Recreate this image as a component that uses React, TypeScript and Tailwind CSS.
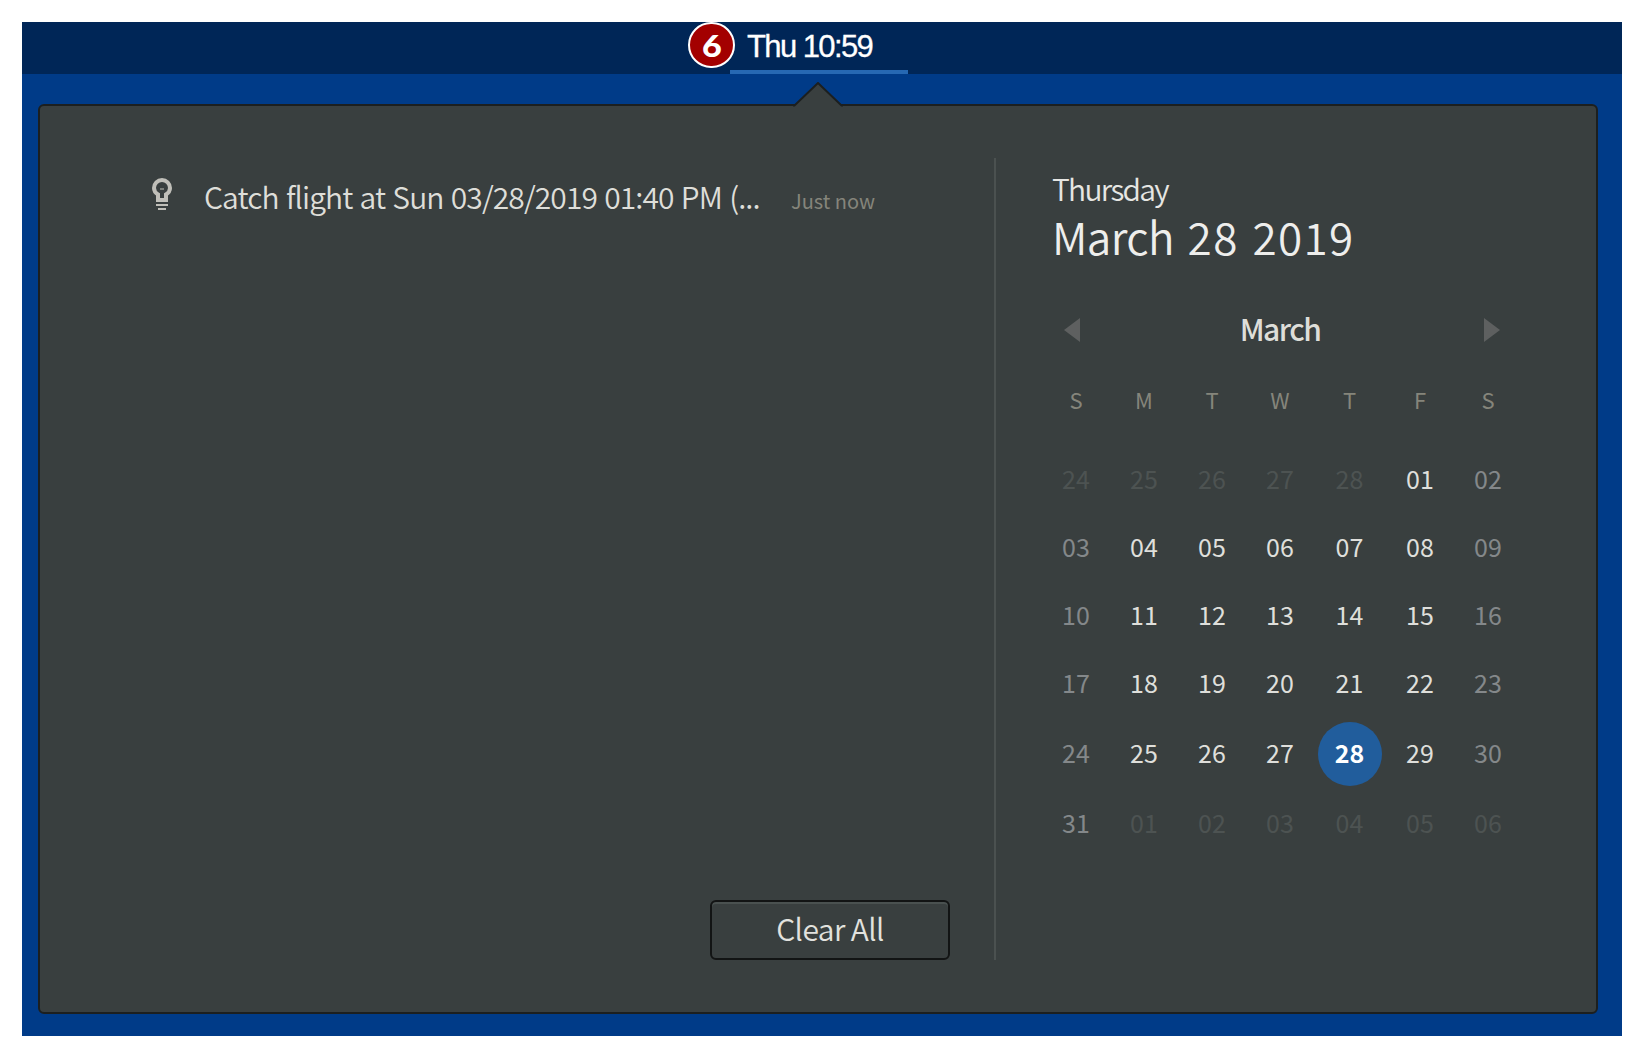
const WEEKDAYS = ["S", "M", "T", "W", "T", "F", "S"];
const WEEKS = [
  ["24", "25", "26", "27", "28", "01", "02"],
  ["03", "04", "05", "06", "07", "08", "09"],
  ["10", "11", "12", "13", "14", "15", "16"],
  ["17", "18", "19", "20", "21", "22", "23"],
  ["24", "25", "26", "27", "28", "29", "30"],
  ["31", "01", "02", "03", "04", "05", "06"],
];

function dayClass(week: number, day: number) {
  if (week === 4 && day === 4)
    return "flex size-16 items-center justify-center rounded-full bg-[#215d9c] pb-[3px] font-bold text-white";
  if ((week === 0 && day < 5) || (week === 5 && day > 0)) return "pb-[3px] text-[#4d5352]";
  if (day === 0 || day === 6) return "pb-[3px] text-[#84888a]";
  return "pb-[3px] text-[#dfdfdb]";
}

function Bulb() {
  return (
    <svg width="20" height="32" viewBox="0 0 20 32" fill="none" className="mt-[2px] shrink-0">
      <path d="M6 20V16.500C3.500 15 2 12.500 2 10a8 8 0 0 1 16 0c0 2.500-1.500 5-4 6.500V20" stroke="#c0bfb9" strokeWidth="4" />
      <path d="M4 20h12v4H4zM4 26h12v2H4zM6 30h8v2H6z" fill="#c0bfb9" />
      <path d="M8 10h4v2H8z" fill="#7d807c" />
    </svg>
  );
}

export default function App() {
  return (
    <div className="h-[1062px] w-[1646px] bg-white p-[22px] font-['Noto_Sans_CJK_SC',sans-serif]">
      <div className="flex h-[1014px] w-[1600px] flex-col bg-[#003b88]">
        <header className="flex h-[52px] shrink-0 bg-[#002657] pl-[666px]">
          <div className="relative z-10 -mr-[5px] flex h-[46px] w-[47px] items-center justify-center rounded-full border-2 border-white bg-[#a30000] font-['Lato',sans-serif] text-[31px] font-black text-white">
            <span className="scale-x-110">6</span>
          </div>
          <div className="flex h-[52px] w-[178px] border-b-4 border-[#2668b3] pl-[17px] font-['Liberation_Sans',sans-serif] text-[31px] leading-[49px] tracking-[-1.6px] text-white [-webkit-text-stroke:0.3px_white]">
            Thu 10:59
          </div>
        </header>
        <main className="relative mt-[30px] ml-4 flex h-[910px] w-[1560px] rounded-md border-2 border-[#1c1f1f] bg-[#393f3f]">
          <svg className="absolute -top-[24px] left-[753px]" width="50" height="26" viewBox="0 0 50 26">
            <path d="M1 26V24L25 1L49 24V26Z" fill="#393f3f" />
            <path d="M0 23.500H1.500L25 1L48.500 23.500H50" fill="none" stroke="#1c1f1f" strokeWidth="2" />
          </svg>
          <section className="flex w-[954px] flex-col">
            <div className="mt-[70px] flex h-9 pl-[112px]">
              <Bulb />
              <span className="ml-[32px] w-[587px] text-[30px] leading-[40px] font-[350] tracking-[-0.9px] [word-spacing:1.4px] whitespace-nowrap text-[#deded9]">
                Catch flight at Sun 03/28/2019 01:40 PM (...
              </span>
              <span className="text-[20px] leading-[49px] text-[#85857b]">Just now</span>
            </div>
            <button className="mt-auto mb-[52px] ml-[670px] h-[60px] w-[240px] rounded-md border-2 border-[#121414] pb-1 text-[30px] leading-[52px] font-[350] tracking-[-0.6px] text-[#e2e2de] shadow-[inset_0_2px_0_#4a5150]">
              Clear All
            </button>
          </section>
          <div className="mt-[52px] h-[802px] w-0.5 bg-[#4b5150]" />
          <section className="ml-[46px] w-[480px]">
            <h2 className="mt-[64px] ml-[10px] h-[42px] text-[30px] leading-[36px] font-[350] tracking-[-1.7px] text-[#e6e6e3]">Thursday</h2>
            <h1 className="ml-[10px] h-[56px] text-[44px] leading-[48px] font-[350] text-[#eeeeec]">
              <span className="tracking-[-0.6px]">March</span>
              <span className="tracking-[1.4px] [word-spacing:2.5px]"> 28 2019</span>
            </h1>
            <div className="mt-[40px] flex h-[44px] items-center justify-between px-[22px]">
              <svg width="16" height="24" viewBox="0 0 16 24"><path d="M16 0V24L0 12Z" fill="#5e6060" /></svg>
              <span className="pr-1 pb-[4px] text-[30px] font-medium tracking-[-1.5px] text-[#deded9]">March</span>
              <svg width="16" height="24" viewBox="0 0 16 24"><path d="M0 0V24L16 12Z" fill="#5e6060" /></svg>
            </div>
            <div className="mt-[16px] grid h-[62px] grid-cols-[68px_68px_68px_68px_71px_70px_66px] place-items-center text-[22px] text-[#85857b]">
              {WEEKDAYS.map((d, i) => <span key={i}>{d}</span>)}
            </div>
            <div className="mt-[16px] grid grid-cols-[68px_68px_68px_68px_71px_70px_66px] grid-rows-[68px_68px_68px_69px_70px_70px] place-items-center text-[25px]">
              {WEEKS.map((w, r) => w.map((d, c) => <span key={r + "-" + c} className={dayClass(r, c)}>{d}</span>))}
            </div>
          </section>
        </main>
      </div>
    </div>
  );
}
